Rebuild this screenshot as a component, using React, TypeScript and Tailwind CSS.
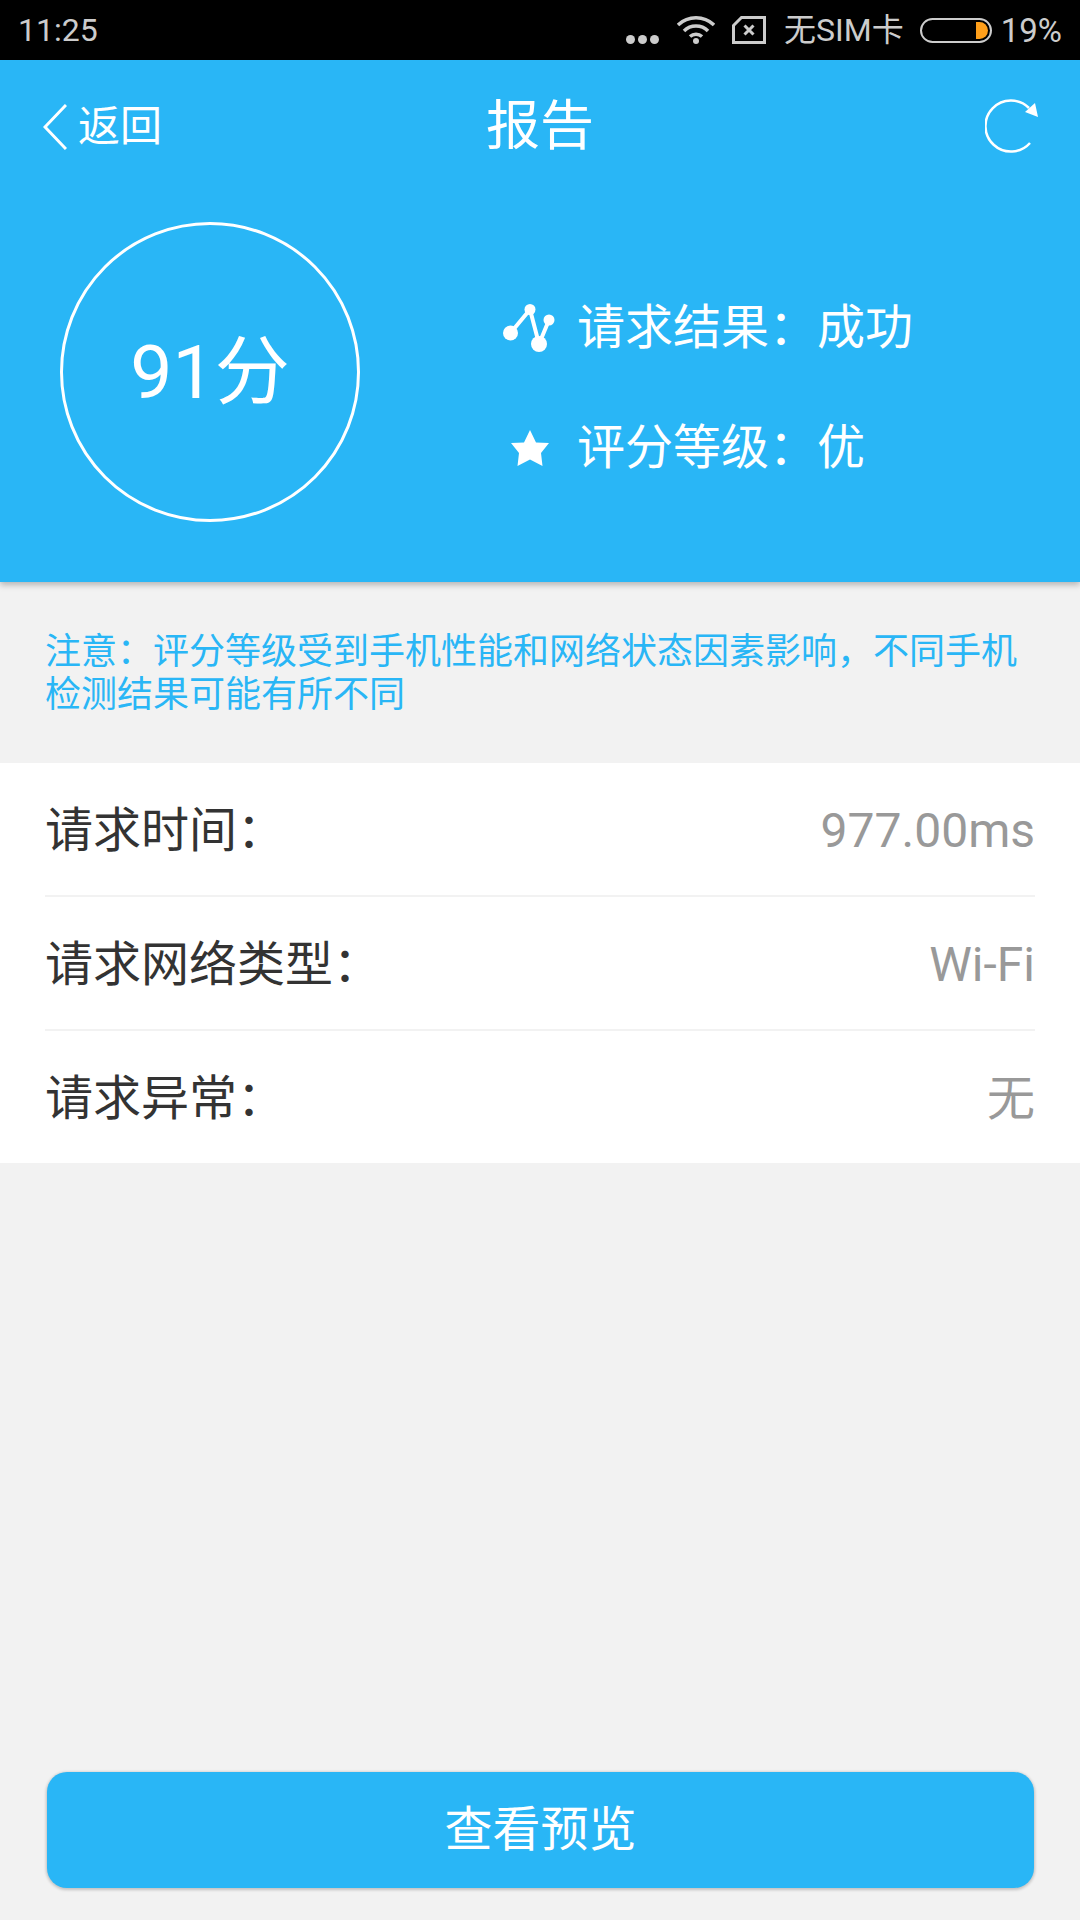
import React from "react";

const sans = "font-['Roboto','Noto_Sans_CJK_SC',sans-serif]";

const StatusBar = () => (
  <div className="h-[60px] bg-black flex items-center justify-between pl-[18px] pr-[18px] text-[#cccccc]">
    <span className="text-[32px] leading-none">11:25</span>
    <div className="flex items-center">
      <div className="flex gap-[3px] mt-[18px]">
        <span className="w-[9px] h-[9px] rounded-full bg-[#cccccc]" />
        <span className="w-[9px] h-[9px] rounded-full bg-[#cccccc]" />
        <span className="w-[9px] h-[9px] rounded-full bg-[#cccccc]" />
      </div>
      <svg className="ml-[18px] mb-[1px]" width="38" height="28" viewBox="0 0 38 28" fill="none" stroke="#cccccc">
        <path d="M1 9 A26 26 0 0 1 37 9" strokeWidth="3.5" />
        <path d="M7 15 A17 17 0 0 1 31 15" strokeWidth="3.5" />
        <path d="M13 20.5 A9 9 0 0 1 25 20.5" strokeWidth="3.5" />
        <circle cx="19" cy="25" r="3" fill="#cccccc" stroke="none" />
      </svg>
      <svg className="ml-[17px] mb-[1px]" width="34" height="28" viewBox="0 0 34 28" fill="none" stroke="#cccccc" strokeWidth="3">
        <path d="M1.5 9.5 L9.5 1.5 H32.5 V26.5 H1.5 Z" />
        <path d="M12.5 9.5 L21.5 18.5 M21.5 9.5 L12.5 18.5" />
      </svg>
      <span className="ml-[18px] text-[32px] leading-none">无SIM卡</span>
      <div className="ml-[16px] w-[72px] h-[25px] rounded-full border-2 border-[#cccccc] flex justify-end items-center pr-[2px]">
        <div className="w-[12px] h-[17px] bg-[#ff9f1a] rounded-r-full" />
      </div>
      <span className="ml-[9px] text-[33px] leading-none">19%</span>
    </div>
  </div>
);

const NavBar = () => (
  <div className="relative h-[134px] flex items-center justify-between pl-[43px] pr-[39px] text-white">
    <div className="flex items-center">
      <svg width="24" height="46" viewBox="0 0 24 46" fill="none" stroke="white" strokeWidth="3">
        <path d="M23 1 L2 23 L23 45" />
      </svg>
      <span className="ml-[11px] text-[42px] leading-none">返回</span>
    </div>
    <span className="absolute left-0 right-0 text-center text-[54px] leading-none">报告</span>
    <svg width="56" height="58" viewBox="0 0 56 58" fill="none" stroke="white" strokeWidth="2.5">
      <path d="M44 10 A25.5 25.5 0 1 0 45 45" />
      <path d="M40 14 L50 5 L53 19 Z" fill="white" stroke="none" />
    </svg>
  </div>
);

const Summary = () => (
  <div className="flex items-center h-[388px] pl-[60px] text-white">
    <div className="w-[300px] h-[300px] mb-[32px] rounded-full border-[3px] border-white flex items-center justify-center text-[75px] leading-none">
      91分
    </div>
    <div className="ml-[143px] flex flex-col gap-[72px]">
      <div className="flex items-center h-[48px]">
        <svg width="52" height="48" viewBox="0 0 52 48" fill="white" stroke="white">
          <path d="M7.5 29 L27 5.5 L36 40 L46 16" fill="none" strokeWidth="4" />
          <circle cx="7.5" cy="29" r="7.5" stroke="none" />
          <circle cx="27" cy="5.5" r="5.5" stroke="none" />
          <circle cx="36" cy="40" r="8" stroke="none" />
          <circle cx="46" cy="16" r="5.5" stroke="none" />
        </svg>
        <span className="ml-[22px] text-[48px] leading-none">{"请求结果\uFF1A成功"}</span>
      </div>
      <div className="flex items-center h-[48px]">
        <svg className="ml-[8px]" width="38" height="36" viewBox="0 0 38 36" fill="white">
          <path d="M19 0 L25 12.5 L38 13 L30 23 L31.5 36 L19 29.5 L6.5 36 L8 23 L0 13 L13 12.5 Z" />
        </svg>
        <span className="ml-[28px] text-[48px] leading-none">{"评分等级\uFF1A优"}</span>
      </div>
    </div>
  </div>
);

const Row = ({ label, value, last }: { label: string; value: string; last?: boolean }) => (
  <div className={`pt-[3px] flex items-center justify-between ${last ? "h-[132px]" : "h-[134px] border-b-2 border-[#f2f2f2]"}`}>
    <span className="text-[48px] leading-none text-[#333333]">{label}</span>
    <span className="text-[48px] leading-none text-[#999999]">{value}</span>
  </div>
);

export default function App() {
  return (
    <div className={`w-[1080px] h-[1920px] flex flex-col bg-[#f2f2f2] ${sans}`}>
      <StatusBar />
      <div className="bg-[#29b6f6] shadow-[0_3px_6px_rgba(0,0,0,0.25)]">
        <NavBar />
        <Summary />
      </div>
      <div className="h-[181px] pt-[2px] flex items-center pl-[45px] pr-[45px] text-[36px] leading-[43px] text-[#29b6f6]">
        {"注意\uFF1A评分等级受到手机性能和网络状态因素影响\uFF0C不同手机检测结果可能有所不同"}
      </div>
      <div className="bg-white pl-[45px] pr-[45px]">
        <Row label={"请求时间\uFF1A"} value="977.00ms" />
        <Row label={"请求网络类型\uFF1A"} value="Wi-Fi" />
        <Row label={"请求异常\uFF1A"} value="无" last />
      </div>
      <div className="flex-1 flex flex-col justify-end pl-[47px] pr-[46px] pb-[32px]">
        <button className="h-[116px] rounded-[20px] bg-[#29b6f6] shadow-[0_1px_3px_1px_rgba(0,0,0,0.2)] text-white text-[48px] leading-none">
          查看预览
        </button>
      </div>
    </div>
  );
}
